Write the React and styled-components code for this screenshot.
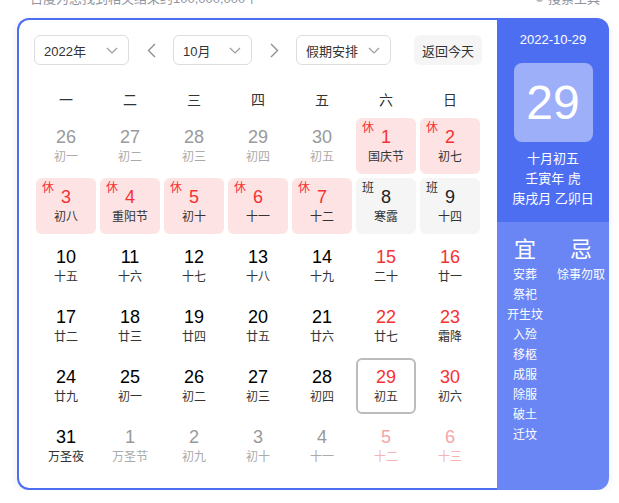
import React from 'react';
import styled, { createGlobalStyle } from 'styled-components';

const GlobalStyle = createGlobalStyle`
  html, body {
    margin: 0;
    padding: 0;
    background: #fff;
  }
  body {
    font-family: Arial, "Liberation Sans", "Noto Sans CJK SC", sans-serif;
    color: #222;
  }
`;

const RED = '#f73131';
const BLUE = '#4e6ef2';

const TopBar = styled.div`
  height: 8px;
  overflow: hidden;
  display: flex;
  justify-content: space-between;
  padding: 0 19px 0 30px;
  font-size: 13px;
  line-height: 17px;
  color: #9195a3;
`;

const TopText = styled.span`
  margin-top: -11px;
  display: flex;
  align-items: center;
  gap: 4px;
`;

const Frame = styled.div`
  display: flex;
  width: 592px;
  margin: 10px 0 0 17px;
  border-radius: 12px;
  box-shadow: 0 2px 8px rgba(0, 0, 0, 0.08);
`;

const Main = styled.div`
  width: 480px;
  box-sizing: border-box;
  border: 2px solid ${BLUE};
  border-right: none;
  border-radius: 12px 0 0 12px;
  padding: 15px 15px 14px 15px;
`;

const Toolbar = styled.div`
  display: flex;
  align-items: center;
  height: 30px;
`;

const SelectBox = styled.div`
  width: ${(p) => p.w}px;
  height: 30px;
  box-sizing: border-box;
  border: 1px solid #dcdde3;
  border-radius: 6px;
  display: flex;
  align-items: center;
  justify-content: space-between;
  padding: 0 10px 0 9px;
  font-size: 13px;
  color: #333;
`;

const ArrowBtn = styled.div`
  width: 44px;
  height: 30px;
  display: flex;
  align-items: center;
  justify-content: center;
`;

const TodayBtn = styled.div`
  margin-left: auto;
  width: 68px;
  height: 30px;
  border-radius: 6px;
  background: #f5f5f6;
  display: flex;
  align-items: center;
  justify-content: center;
  font-size: 13px;
  color: #333;
`;

const WeekRow = styled.div`
  display: grid;
  grid-template-columns: repeat(7, 60px);
  column-gap: 4px;
  margin: 15px 2px 0;
  height: 38px;
  align-items: center;
  text-align: center;
  font-size: 14px;
  color: #333;
`;

const Grid = styled.div`
  display: grid;
  grid-template-columns: repeat(7, 60px);
  grid-auto-rows: 56px;
  gap: 4px;
  margin: 0 2px;
`;

const Cell = styled.div`
  position: relative;
  box-sizing: border-box;
  border-radius: 6px;
  display: flex;
  flex-direction: column;
  align-items: center;
  justify-content: center;
  background: ${(p) => (p.kind === 'rest' ? '#fde3e4' : p.kind === 'work' ? '#f5f5f6' : 'transparent')};
  border: ${(p) => (p.today ? '2px solid #bcbcbc' : 'none')};
`;

const Num = styled.div`
  font-size: 18px;
  line-height: 22px;
  color: ${(p) => p.color};
`;

const Lunar = styled.div`
  font-size: 12px;
  line-height: 17px;
  margin-top: 1px;
  color: ${(p) => p.color};
`;

const Tag = styled.span`
  position: absolute;
  left: 6px;
  top: 3px;
  font-size: 12px;
  line-height: 14px;
  color: ${(p) => (p.rest ? RED : '#333')};
`;

const Side = styled.div`
  width: 112px;
  display: flex;
  flex-direction: column;
  color: #fff;
`;

const SideTop = styled.div`
  background: ${BLUE};
  border-radius: 0 12px 0 0;
  padding: 12px 0 13px;
  display: flex;
  flex-direction: column;
  align-items: center;
  font-size: 13px;
  line-height: 20px;
`;

const BigDay = styled.div`
  width: 79px;
  height: 79px;
  margin: 13px 0 7px;
  border-radius: 8px;
  background: rgba(255, 255, 255, 0.45);
  display: flex;
  align-items: center;
  justify-content: center;
  font-size: 48px;
  line-height: 1;
`;

const SideBottom = styled.div`
  flex: 1;
  background: #6a86f5;
  border-radius: 0 0 12px 0;
  display: grid;
  grid-template-columns: 56px 56px;
  padding-top: 14px;
  align-content: start;
`;

const Col = styled.div`
  display: flex;
  flex-direction: column;
  align-items: center;
  font-size: 12px;
  line-height: 20px;
  white-space: nowrap;
`;

const ColHead = styled.div`
  font-size: 22px;
  line-height: 28px;
  margin-bottom: 1px;
`;

const Chevron = () => (
  <svg width="12" height="7" viewBox="0 0 12 7" fill="none">
    <polyline points="1,1 6,6 11,1" stroke="#9a9a9a" strokeWidth="1.1" />
  </svg>
);

const Arrow = ({ dir }) => (
  <svg width="9" height="15" viewBox="0 0 9 15" fill="none">
    <polyline
      points={dir === 'left' ? '8,1 1.5,7.5 8,14' : '1,1 7.5,7.5 1,14'}
      stroke="#8f8f8f"
      strokeWidth="1.4"
    />
  </svg>
);

const weekDays = ['一', '二', '三', '四', '五', '六', '日'];

// [day, lunar, other month, tag]
const days = [
  [26, '初一', 1], [27, '初二', 1], [28, '初三', 1], [29, '初四', 1], [30, '初五', 1], [1, '国庆节', 0, 'rest'], [2, '初七', 0, 'rest'],
  [3, '初八', 0, 'rest'], [4, '重阳节', 0, 'rest'], [5, '初十', 0, 'rest'], [6, '十一', 0, 'rest'], [7, '十二', 0, 'rest'], [8, '寒露', 0, 'work'], [9, '十四', 0, 'work'],
  [10, '十五'], [11, '十六'], [12, '十七'], [13, '十八'], [14, '十九'], [15, '二十'], [16, '廿一'],
  [17, '廿二'], [18, '廿三'], [19, '廿四'], [20, '廿五'], [21, '廿六'], [22, '廿七'], [23, '霜降'],
  [24, '廿九'], [25, '初一'], [26, '初二'], [27, '初三'], [28, '初四'], [29, '初五', 0, null, 1], [30, '初六'],
  [31, '万圣夜'], [1, '万圣节', 1], [2, '初九', 1], [3, '初十', 1], [4, '十一', 1], [5, '十二', 1], [6, '十三', 1],
];

const good = ['安葬', '祭祀', '开生坟', '入殓', '移柩', '成服', '除服', '破土', '迁坟'];

function numColor(other, weekend, kind) {
  if (other) return weekend ? '#f5a5a8' : '#999';
  if (kind === 'rest') return RED;
  if (kind === 'work') return '#222';
  return weekend ? RED : '#000';
}

function lunarColor(other, weekend) {
  if (other) return weekend ? '#f5b5b7' : '#aaa';
  return '#333';
}

export default function App() {
  return (
    <>
      <GlobalStyle />
      <TopBar>
        <TopText>百度为您找到相关结果约100,000,000个</TopText>
        <TopText>
          <svg width="9" height="9" viewBox="0 0 9 9">
            <circle cx="4.5" cy="4.5" r="3.5" fill="#b5b8c2" />
          </svg>
          搜索工具
        </TopText>
      </TopBar>
      <Frame>
        <Main>
          <Toolbar>
            <SelectBox w={95}>2022年<Chevron /></SelectBox>
            <ArrowBtn><Arrow dir="left" /></ArrowBtn>
            <SelectBox w={79}>10月<Chevron /></SelectBox>
            <ArrowBtn><Arrow dir="right" /></ArrowBtn>
            <SelectBox w={95}>假期安排<Chevron /></SelectBox>
            <TodayBtn>返回今天</TodayBtn>
          </Toolbar>
          <WeekRow>
            {weekDays.map((w) => <div key={w}>{w}</div>)}
          </WeekRow>
          <Grid>
            {days.map(([d, l, other, kind, today], i) => {
              const weekend = i % 7 >= 5;
              return (
                <Cell key={i} kind={kind} today={today}>
                  {kind && <Tag rest={kind === 'rest'}>{kind === 'rest' ? '休' : '班'}</Tag>}
                  <Num color={numColor(other, weekend, kind)}>{d}</Num>
                  <Lunar color={lunarColor(other, weekend)}>{l}</Lunar>
                </Cell>
              );
            })}
          </Grid>
        </Main>
        <Side>
          <SideTop>
            <div>2022-10-29</div>
            <BigDay>29</BigDay>
            <div>十月初五</div>
            <div>壬寅年 虎</div>
            <div>庚戌月 乙卯日</div>
          </SideTop>
          <SideBottom>
            <Col>
              <ColHead>宜</ColHead>
              {good.map((g) => <div key={g}>{g}</div>)}
            </Col>
            <Col>
              <ColHead>忌</ColHead>
              <div>馀事勿取</div>
            </Col>
          </SideBottom>
        </Side>
      </Frame>
    </>
  );
}
